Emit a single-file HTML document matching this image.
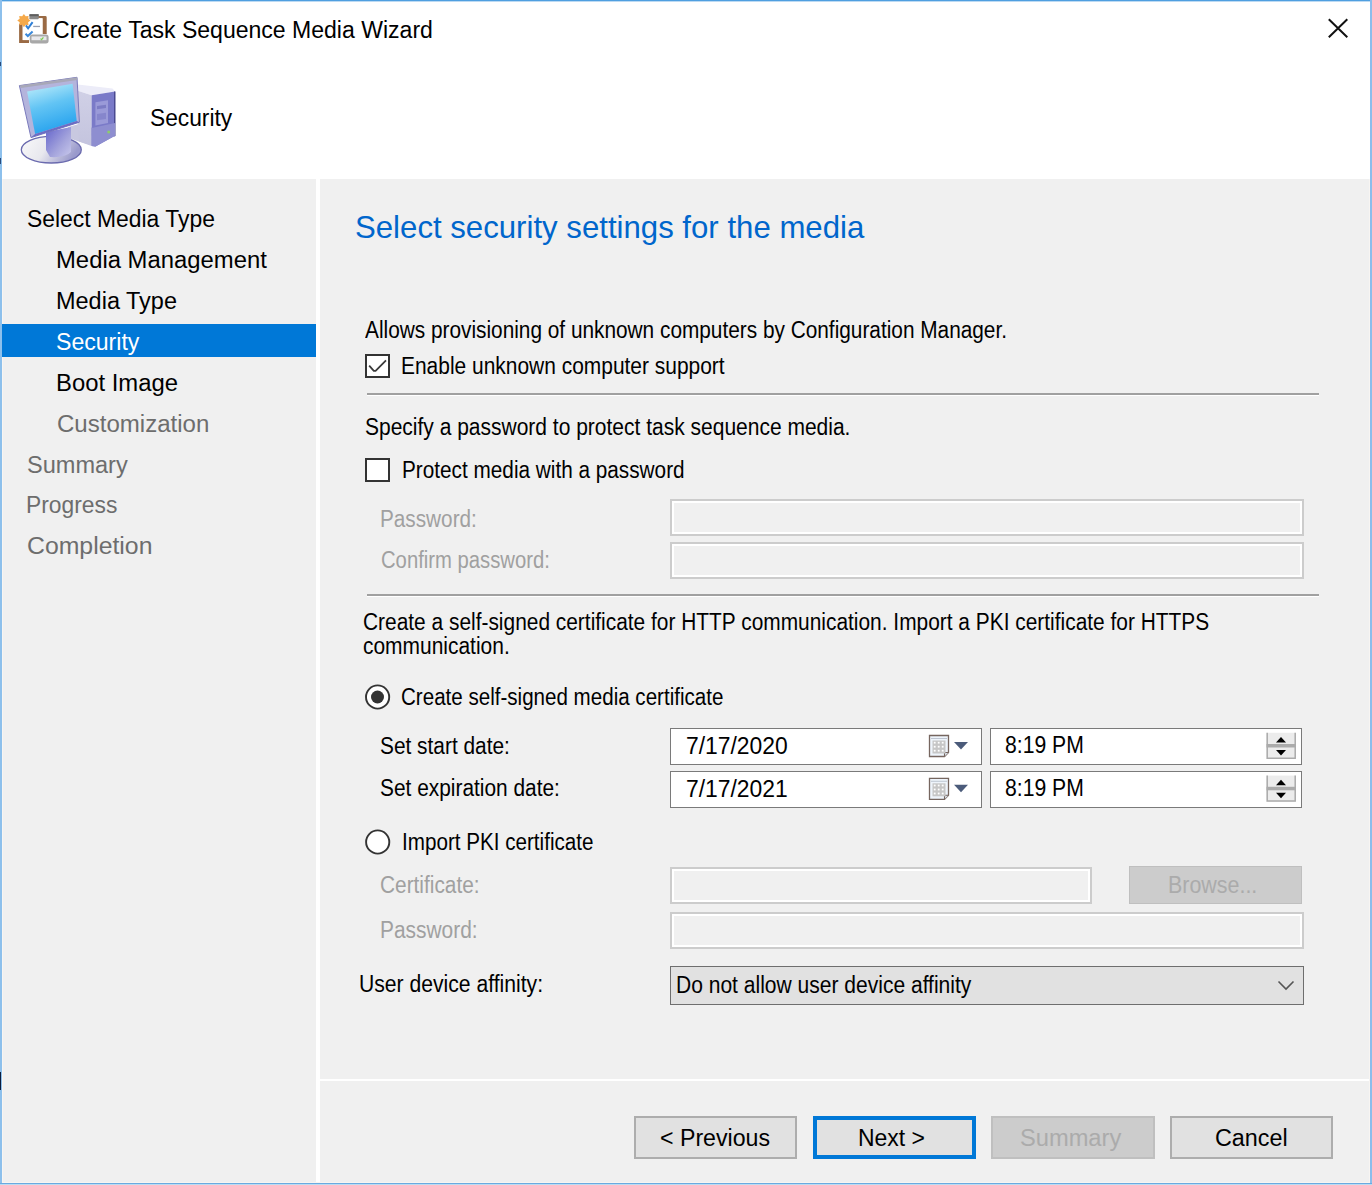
<!DOCTYPE html>
<html><head><meta charset="utf-8"><title>Create Task Sequence Media Wizard</title>
<style>
html,body{margin:0;padding:0}
body{width:1372px;height:1185px;position:relative;overflow:hidden;background:#f0f0f0;font-family:"Liberation Sans",sans-serif}
.t{position:absolute;white-space:nowrap;transform-origin:0 0}
svg{position:absolute;left:0;top:0}
</style></head><body>

<div style="position:absolute;left:0px;top:0px;width:1372px;height:1185px;background:#f0f0f0"></div>
<div style="position:absolute;left:2px;top:1px;width:1368px;height:178px;background:#fff"></div>
<div style="position:absolute;left:316px;top:179px;width:4px;height:1004px;background:#fff"></div>
<div style="position:absolute;left:320px;top:1079px;width:1050px;height:2px;background:#fff"></div>
<div style="position:absolute;left:0px;top:0px;width:1372px;height:1px;background:#4f9fe0"></div>
<div style="position:absolute;left:0px;top:1px;width:1372px;height:1px;background:#bcdaf3"></div>
<div style="position:absolute;left:0px;top:0px;width:2px;height:1185px;background:#8dc0ec"></div>
<div style="position:absolute;left:1370px;top:0px;width:2px;height:1185px;background:#8bbdeb"></div>
<div style="position:absolute;left:0px;top:1183px;width:1372px;height:1px;background:#6aaae0"></div>
<div style="position:absolute;left:0px;top:1184px;width:1372px;height:1px;background:#bbdcf3"></div>
<div style="position:absolute;left:2px;top:179px;width:1px;height:1004px;background:#f8f5f2"></div>
<div style="position:absolute;left:2px;top:1182px;width:1368px;height:1px;background:#f8f5f2"></div>
<div style="position:absolute;left:1369px;top:179px;width:1px;height:1004px;background:#f8f5f2"></div>
<div style="position:absolute;left:0px;top:1072px;width:1px;height:18px;background:#0c1c3c"></div>
<div style="position:absolute;left:0px;top:62px;width:1px;height:4px;background:#2a4a7a"></div>
<div style="position:absolute;left:0px;top:158px;width:1px;height:6px;background:#2a4a7a"></div>
<div style="position:absolute;left:2px;top:324px;width:314px;height:33px;background:#0078d7"></div>
<div style="position:absolute;left:367px;top:393px;width:952px;height:2px;background:#a0a0a0"></div>
<div style="position:absolute;left:367px;top:395px;width:952px;height:1px;background:#fff"></div>
<div style="position:absolute;left:367px;top:594px;width:952px;height:2px;background:#a0a0a0"></div>
<div style="position:absolute;left:367px;top:596px;width:952px;height:1px;background:#fff"></div>
<div style="position:absolute;left:365px;top:354px;width:25px;height:24px;background:#fff;border:2px solid #333;box-sizing:border-box"></div>
<div style="position:absolute;left:365px;top:458px;width:25px;height:24px;background:#fff;border:2px solid #333;box-sizing:border-box"></div>
<div style="position:absolute;left:670px;top:499px;width:634px;height:37px;background:#f0f0f0;border:2px solid #cccccc;box-sizing:border-box;box-shadow:inset 0 0 0 2px #fff"></div>
<div style="position:absolute;left:670px;top:542px;width:634px;height:37px;background:#f0f0f0;border:2px solid #cccccc;box-sizing:border-box;box-shadow:inset 0 0 0 2px #fff"></div>
<div style="position:absolute;left:670px;top:867px;width:422px;height:37px;background:#f0f0f0;border:2px solid #cccccc;box-sizing:border-box;box-shadow:inset 0 0 0 2px #fff"></div>
<div style="position:absolute;left:670px;top:912px;width:634px;height:37px;background:#f0f0f0;border:2px solid #cccccc;box-sizing:border-box;box-shadow:inset 0 0 0 2px #fff"></div>
<div style="position:absolute;left:1129px;top:865.5px;width:173px;height:38.5px;background:#cccccc;border:1.5px solid #bfbfbf;box-sizing:border-box"></div>
<div style="position:absolute;left:669.5px;top:728px;width:312px;height:37px;background:#fff;border:1.5px solid #7a7a7a;box-sizing:border-box"></div>
<div style="position:absolute;left:989.5px;top:728px;width:312.5px;height:37px;background:#fff;border:1.5px solid #7a7a7a;box-sizing:border-box"></div>
<div style="position:absolute;left:669.5px;top:770.5px;width:312px;height:37px;background:#fff;border:1.5px solid #7a7a7a;box-sizing:border-box"></div>
<div style="position:absolute;left:989.5px;top:770.5px;width:312.5px;height:37px;background:#fff;border:1.5px solid #7a7a7a;box-sizing:border-box"></div>
<div style="position:absolute;left:669.5px;top:966px;width:634.5px;height:39px;background:#e1e1e1;border:1.8px solid #6e6e6e;box-sizing:border-box"></div>
<div style="position:absolute;left:634px;top:1116px;width:163px;height:43px;background:#e1e1e1;border:2px solid #adadad;box-sizing:border-box"></div>
<div style="position:absolute;left:813px;top:1116px;width:163px;height:43px;background:#e1e1e1;border:4px solid #0078d7;box-sizing:border-box"></div>
<div style="position:absolute;left:991px;top:1116px;width:163.5px;height:43px;background:#cccccc;border:2px solid #bfbfbf;box-sizing:border-box"></div>
<div style="position:absolute;left:1170px;top:1116px;width:163px;height:43px;background:#e1e1e1;border:2px solid #adadad;box-sizing:border-box"></div>
<svg width="1372" height="1185" viewBox="0 0 1372 1185"><defs>
<linearGradient id="scr" x1="0" y1="0" x2="0.3" y2="1"><stop offset="0" stop-color="#c4f0fb"/><stop offset="0.5" stop-color="#62c4f4"/><stop offset="1" stop-color="#2aa4ee"/></linearGradient>
<linearGradient id="twr" x1="0" y1="0" x2="1" y2="0"><stop offset="0" stop-color="#e4e4f4"/><stop offset="1" stop-color="#b4b4de"/></linearGradient>
<linearGradient id="bse" x1="0" y1="0" x2="1" y2="1"><stop offset="0" stop-color="#ffffff"/><stop offset="1" stop-color="#b8b8dc"/></linearGradient>
</defs><path d="M1328.8 19.2 L1347.3 37.3 M1347.3 19.2 L1328.8 37.3" stroke="#111" stroke-width="2" fill="none"/><path d="M369.2 365.6 L373.8 370.8 L375.6 370.8 L386 360.3" stroke="#3a3a3a" stroke-width="1.8" fill="none"/><circle cx="377.6" cy="697" r="11.6" fill="#fff" stroke="#333" stroke-width="1.9"/><circle cx="377.5" cy="697" r="6.5" fill="#333"/><circle cx="377.7" cy="842" r="11.6" fill="#fff" stroke="#333" stroke-width="1.9"/><path d="M929.5 735.5 H948.5 V752.5 L944.5 756.5 H929.5 Z" fill="#eef4fb" stroke="#76665f" stroke-width="1.3"/><path d="M944.5 756.5 V752.5 H948.5" fill="#d8dde6" stroke="#76665f" stroke-width="1.1"/><rect x="931" y="738" width="16" height="0.9" fill="#b8c0cc"/><rect x="932.5" y="740.5" width="13" height="13" fill="#c6c6c6"/><rect x="933.8" y="741.8" width="1.8" height="1.8" fill="#fff"/><rect x="933.8" y="745.8" width="1.8" height="1.8" fill="#fff"/><rect x="933.8" y="749.8" width="1.8" height="1.8" fill="#fff"/><rect x="937.8" y="741.8" width="1.8" height="1.8" fill="#fff"/><rect x="937.8" y="745.8" width="1.8" height="1.8" fill="#fff"/><rect x="937.8" y="749.8" width="1.8" height="1.8" fill="#fff"/><rect x="941.8" y="741.8" width="1.8" height="1.8" fill="#fff"/><rect x="941.8" y="745.8" width="1.8" height="1.8" fill="#fff"/><rect x="941.8" y="749.8" width="1.8" height="1.8" fill="#fff"/><path d="M954 742 L968 742 L961 749.5 Z" fill="#4b5b7a"/><rect x="1266.5" y="732.8" width="29.5" height="26" fill="#ececec"/><path d="M1267.2 732.8 V758.2 H1295.2 V732.8" stroke="#ababab" stroke-width="1.5" fill="none"/><rect x="1266.5" y="744" width="29.5" height="3.5" fill="#ababab"/><path d="M1276 742.5 L1286 742.5 L1281 737 Z" fill="#000"/><path d="M1276 750 L1286 750 L1281 755.5 Z" fill="#000"/><path d="M929.5 778.3 H948.5 V795.3 L944.5 799.3 H929.5 Z" fill="#eef4fb" stroke="#76665f" stroke-width="1.3"/><path d="M944.5 799.3 V795.3 H948.5" fill="#d8dde6" stroke="#76665f" stroke-width="1.1"/><rect x="931" y="780.8" width="16" height="0.9" fill="#b8c0cc"/><rect x="932.5" y="783.3" width="13" height="13" fill="#c6c6c6"/><rect x="933.8" y="784.5999999999999" width="1.8" height="1.8" fill="#fff"/><rect x="933.8" y="788.5999999999999" width="1.8" height="1.8" fill="#fff"/><rect x="933.8" y="792.5999999999999" width="1.8" height="1.8" fill="#fff"/><rect x="937.8" y="784.5999999999999" width="1.8" height="1.8" fill="#fff"/><rect x="937.8" y="788.5999999999999" width="1.8" height="1.8" fill="#fff"/><rect x="937.8" y="792.5999999999999" width="1.8" height="1.8" fill="#fff"/><rect x="941.8" y="784.5999999999999" width="1.8" height="1.8" fill="#fff"/><rect x="941.8" y="788.5999999999999" width="1.8" height="1.8" fill="#fff"/><rect x="941.8" y="792.5999999999999" width="1.8" height="1.8" fill="#fff"/><path d="M954 784.8 L968 784.8 L961 792.3 Z" fill="#4b5b7a"/><rect x="1266.5" y="775.5999999999999" width="29.5" height="26" fill="#ececec"/><path d="M1267.2 775.5999999999999 V801.0 H1295.2 V775.5999999999999" stroke="#ababab" stroke-width="1.5" fill="none"/><rect x="1266.5" y="786.8" width="29.5" height="3.5" fill="#ababab"/><path d="M1276 785.3 L1286 785.3 L1281 779.8 Z" fill="#000"/><path d="M1276 792.8 L1286 792.8 L1281 798.3 Z" fill="#000"/><path d="M1278.5 981.5 L1286 989 L1293.5 981.5" stroke="#555" stroke-width="1.6" fill="none"/><g>
<defs>
<linearGradient id="bse2" x1="0" y1="0" x2="1" y2="0.3"><stop offset="0" stop-color="#fafafa"/><stop offset="0.5" stop-color="#e8e8ee"/><stop offset="1" stop-color="#9a9acc"/></linearGradient>
<linearGradient id="nck" x1="0" y1="0" x2="1" y2="1"><stop offset="0" stop-color="#6464cc"/><stop offset="0.6" stop-color="#a4a4dc"/><stop offset="1" stop-color="#c8c8ec"/></linearGradient>
<linearGradient id="lf" x1="0" y1="0" x2="0" y2="1"><stop offset="0" stop-color="#d0d0e6"/><stop offset="1" stop-color="#c4c4de"/></linearGradient>
</defs>
<path d="M68 127 L79 124 L95.5 128 L95.5 146.5 L79 141.5 L68 138 Z" fill="#c8c8e0"/>
<path d="M77.7 84.5 L112.5 88.6 L115 91.5 L91.6 95.3 L77.7 90.8 Z" fill="#ececf8"/>
<path d="M77.7 90.8 L91.6 95.3 L91.6 146 L79 141.5 L77.7 124 Z" fill="url(#lf)"/>
<path d="M91.6 95.3 L115 91.5 L115 135.8 L95.5 146.5 L91.6 146 Z" fill="#7a7ac8"/>
<path d="M114 91.5 L115.5 91.5 L115.5 136 L114 136.5 Z" fill="#4a4a90"/>
<path d="M95.4 102.2 L108 100.3 L108 123 L95.4 125.6 Z" fill="#9a9ad8"/>
<path d="M97 106 L106 104.8 L106 108 L97 109.3 Z" fill="#7c7cc4"/>
<path d="M97 114 L106 112.8 L106 119 L97 120.3 Z" fill="#8686cc"/>
<path d="M91.6 128 L115 123 L115 135.8 L95.5 146.5 L91.6 146 Z" fill="#8e8ed0"/>
<circle cx="108.7" cy="132" r="1.5" fill="#8ccc6c"/>
<ellipse cx="51.3" cy="149.7" rx="30" ry="13.3" fill="url(#bse2)" stroke="#6a6aae" stroke-width="1.3"/>
<path d="M46 132 L71 127 L71 152 Q65 158 50 157 L46 150 Z" fill="url(#nck)"/>
<path d="M19.4 85.6 L77 77.3 L79.4 122.2 L31 137.6 Z" fill="#b4b4dc" stroke="#7a7abc" stroke-width="1"/>
<path d="M19.4 85.6 L77 77.3 L77.4 80 L21 88 Z" fill="#a8a8b8"/>
<path d="M27.1 91.5 L72.6 83.8 L76.7 121 L35.1 134 Z" fill="url(#scr)"/>
<path d="M35.1 134 L76.7 121 L79.4 122.2 L31 137.6 Z" fill="#6c6cc4"/>
</g><g>
<path d="M19.1 24 L19.1 43 L29 43 L29 40.1 L22.7 40.1 L22.7 18.3 L42.5 18.3 L42.5 34 L46.7 34 L46.7 17.5 Q46.7 16.1 45.3 16.1 L38 16.1 L38 18.3 Z" fill="#9a6a44"/>
<rect x="22.7" y="18.3" width="19.8" height="21.8" fill="#ffffff"/>
<rect x="29.4" y="14.2" width="9.3" height="5.1" rx="0.8" fill="#8a8a8a"/>
<rect x="29.4" y="14.2" width="9.3" height="2" fill="#5f5f5f"/>
<polygon points="23.90,14.00 25.66,16.35 28.57,15.93 28.15,18.84 30.50,20.60 28.15,22.36 28.57,25.27 25.66,24.85 23.90,27.20 22.14,24.85 19.23,25.27 19.65,22.36 17.30,20.60 19.65,18.84 19.23,15.93 22.14,16.35" fill="#f5a94a"/>
<path d="M25.9 25.4 L28.1 28.3 L32.6 22.2" stroke="#2f7fd6" stroke-width="2" fill="none"/>
<path d="M25.5 33.7 L27.8 36 L32.6 31.5" stroke="#3a88da" stroke-width="2" fill="none"/>
<rect x="33.2" y="25.8" width="6.8" height="1.3" fill="#9aa0b0"/>
<rect x="29.7" y="34.4" width="18.9" height="9" rx="2.6" fill="#a8a8a8"/>
<rect x="31.5" y="36.4" width="15" height="3.8" fill="#e8e8ec"/>
<path d="M40.5 38.6 L41.6 39.6 L43.4 37.4" stroke="#7acc50" stroke-width="1.2" fill="none"/>
</g></svg>
<div class="t" style="left:53.4px;top:19.4px;font-size:23px;line-height:23px;color:#000;transform:scaleX(1.0016)">Create Task Sequence Media Wizard</div>
<div class="t" style="left:150.21px;top:107px;font-size:23px;line-height:23px;color:#000;transform:scaleX(0.9890)">Security</div>
<div class="t" style="left:26.6px;top:207.5px;font-size:23px;line-height:23px;color:#000;transform:scaleX(0.9952)">Select Media Type</div>
<div class="t" style="left:55.83px;top:248.5px;font-size:23px;line-height:23px;color:#000;transform:scaleX(1.0373)">Media Management</div>
<div class="t" style="left:55.86px;top:289.7px;font-size:23px;line-height:23px;color:#000;transform:scaleX(1.0207)">Media Type</div>
<div class="t" style="left:56.1px;top:330.5px;font-size:23px;line-height:23px;color:#fff;transform:scaleX(1.0037)">Security</div>
<div class="t" style="left:55.53px;top:372px;font-size:23px;line-height:23px;color:#000;transform:scaleX(1.0374)">Boot Image</div>
<div class="t" style="left:56.56px;top:412.8px;font-size:23px;line-height:23px;color:#6d6d6d;transform:scaleX(1.0448)">Customization</div>
<div class="t" style="left:27.08px;top:453.6px;font-size:23px;line-height:23px;color:#6d6d6d;transform:scaleX(1.0237)">Summary</div>
<div class="t" style="left:26.12px;top:494.3px;font-size:23px;line-height:23px;color:#6d6d6d;transform:scaleX(0.9921)">Progress</div>
<div class="t" style="left:27.02px;top:535.1px;font-size:23px;line-height:23px;color:#6d6d6d;transform:scaleX(1.0781)">Completion</div>
<div class="t" style="left:355.05px;top:211.3px;font-size:32px;line-height:32px;color:#0066cc;transform:scaleX(0.9739)">Select security settings for the media</div>
<div class="t" style="left:364.9px;top:319.4px;font-size:23px;line-height:23px;color:#000;transform:scaleX(0.9048)">Allows provisioning of unknown computers by Configuration Manager.</div>
<div class="t" style="left:401.28px;top:355px;font-size:23px;line-height:23px;color:#000;transform:scaleX(0.9105)">Enable unknown computer support</div>
<div class="t" style="left:364.69px;top:416.1px;font-size:23px;line-height:23px;color:#000;transform:scaleX(0.9127)">Specify a password to protect task sequence media.</div>
<div class="t" style="left:401.5px;top:459px;font-size:23px;line-height:23px;color:#000;transform:scaleX(0.9023)">Protect media with a password</div>
<div class="t" style="left:380.4px;top:508px;font-size:23px;line-height:23px;color:#a0a0a0;transform:scaleX(0.9019)">Password:</div>
<div class="t" style="left:381.32px;top:548.8px;font-size:23px;line-height:23px;color:#a0a0a0;transform:scaleX(0.8804)">Confirm password:</div>
<div class="t" style="left:363.29px;top:611.2px;font-size:23px;line-height:23px;color:#000;transform:scaleX(0.9085)">Create a self-signed certificate for HTTP communication. Import a PKI certificate for HTTPS</div>
<div class="t" style="left:363.29px;top:635.2px;font-size:23px;line-height:23px;color:#000;transform:scaleX(0.9108)">communication.</div>
<div class="t" style="left:400.51px;top:685.5px;font-size:23px;line-height:23px;color:#000;transform:scaleX(0.8942)">Create self-signed media certificate</div>
<div class="t" style="left:380.09px;top:734.5px;font-size:23px;line-height:23px;color:#000;transform:scaleX(0.9071)">Set start date:</div>
<div class="t" style="left:380.09px;top:777.2px;font-size:23px;line-height:23px;color:#000;transform:scaleX(0.9077)">Set expiration date:</div>
<div class="t" style="left:685.61px;top:734.9px;font-size:23px;line-height:23px;color:#000;transform:scaleX(0.9941)">7/17/2020</div>
<div class="t" style="left:685.61px;top:777.5px;font-size:23px;line-height:23px;color:#000;transform:scaleX(0.9940)">7/17/2021</div>
<div class="t" style="left:1004.68px;top:734.3px;font-size:23px;line-height:23px;color:#000;transform:scaleX(0.9205)">8:19 PM</div>
<div class="t" style="left:1004.68px;top:777px;font-size:23px;line-height:23px;color:#000;transform:scaleX(0.9205)">8:19 PM</div>
<div class="t" style="left:401.71px;top:831.1px;font-size:23px;line-height:23px;color:#000;transform:scaleX(0.8972)">Import PKI certificate</div>
<div class="t" style="left:379.59px;top:873.7px;font-size:23px;line-height:23px;color:#a0a0a0;transform:scaleX(0.9056)">Certificate:</div>
<div class="t" style="left:379.98px;top:918.9px;font-size:23px;line-height:23px;color:#a0a0a0;transform:scaleX(0.9087)">Password:</div>
<div class="t" style="left:1168.34px;top:873.9px;font-size:23px;line-height:23px;color:#ababab;transform:scaleX(0.9315)">Browse...</div>
<div class="t" style="left:358.76px;top:973px;font-size:23px;line-height:23px;color:#000;transform:scaleX(0.9189)">User device affinity:</div>
<div class="t" style="left:676.17px;top:974px;font-size:23px;line-height:23px;color:#000;transform:scaleX(0.9143)">Do not allow user device affinity</div>
<div class="t" style="left:659.99px;top:1126.8px;font-size:23px;line-height:23px;color:#000;transform:scaleX(1.0065)">&lt; Previous</div>
<div class="t" style="left:857.5px;top:1126.8px;font-size:23px;line-height:23px;color:#000;transform:scaleX(0.9984)">Next &gt;</div>
<div class="t" style="left:1019.97px;top:1126.8px;font-size:23px;line-height:23px;color:#ababab;transform:scaleX(1.0289)">Summary</div>
<div class="t" style="left:1214.98px;top:1126.8px;font-size:23px;line-height:23px;color:#000;transform:scaleX(1.0159)">Cancel</div>
</body></html>
